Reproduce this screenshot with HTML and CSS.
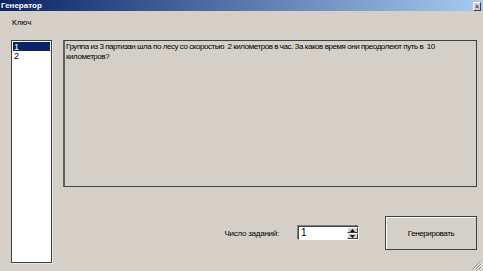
FILE: index.html
```html
<!DOCTYPE html>
<html lang="ru">

<head>
  <meta charset="UTF-8">
  <title>Генератор</title>
  <link rel="stylesheet" href="styles.css">
</head>

<body>
  <div class="gen-window">
    <!-- Заголовок окна -->
    <div class="gen-titlebar">
      <span class="gen-title">Генератор</span>
      <span class="gen-close">×</span>
    </div>

    <div class="gen-client">
      <div class="gen-key-label">Ключ</div>

      <div class="gen-main">
        <ul class="gen-list">
          <li class="gen-list-item gen-selected">1</li>
          <li class="gen-list-item">2</li>
        </ul>

        <div class="gen-right">
          <div class="gen-task">Группа из 3 партизан шла по лесу со скоростью  2 километров в час. За каков время они преодолеют путь в  10 километров?</div>

          <div class="gen-controls">
            <span class="gen-count-label">Число заданий:</span>
            <div class="gen-spin">
              <span class="gen-spin-value">1</span>
              <div class="gen-spin-buttons">
                <span class="gen-spin-btn">
                  <svg width="5" height="3" viewBox="0 0 5 3"><path d="M2.5 0 L5 3 L0 3 Z" fill="#000"/></svg>
                </span>
                <span class="gen-spin-btn">
                  <svg width="5" height="3" viewBox="0 0 5 3"><path d="M0 0 L5 0 L2.5 3 Z" fill="#000"/></svg>
                </span>
              </div>
            </div>
            <button class="gen-button">Генерировать</button>
          </div>
        </div>
      </div>
    </div>

    <!-- Уголок изменения размера -->
    <svg class="gen-grip" width="10" height="10" viewBox="0 0 10 10">
      <path d="M9 1 L1 9 M9 4 L4 9 M9 7 L7 9" stroke="#808080" stroke-width="1"/>
      <path d="M10 1 L2 9 M10 4 L5 9 M10 7 L8 9" stroke="#fff" stroke-width="1"/>
    </svg>
  </div>
</body>

</html>
```

FILE: styles.css
```css
body {
  margin: 0;
  padding: 0;
}

/* Окно целиком */
.gen-window {
  position: relative;
  width: 483px;
  height: 271px;
  background-color: #d4d0c8;
  font-family: 'Liberation Sans', Arial, sans-serif;
  font-size: 8px;
  color: #000;
  overflow: hidden;
}

.gen-titlebar {
  height: 11px;
  display: flex;
  align-items: center;
  justify-content: space-between;
  padding: 0 2px 0 1px;
  background: linear-gradient(to right, #0a246a, #a6caf0);
}

.gen-title {
  color: #fff;
  font-weight: 700;
  font-size: 8px;
  line-height: 11px;
}

.gen-close {
  width: 6px;
  height: 7px;
  background: #d4d0c8;
  border: 1px solid;
  border-color: #fff #404040 #404040 #fff;
  font-size: 7px;
  line-height: 7px;
  text-align: center;
  margin-top: 1px;
}

.gen-client {
  padding: 6px 6px 0 11px;
}

.gen-key-label {
  height: 12px;
  line-height: 12px;
  margin-left: 1px;
  margin-bottom: 11px;
}

.gen-main {
  display: flex;
  gap: 11px;
}

/* Список ключей */
.gen-list {
  list-style: none;
  margin: 0;
  padding: 1px;
  width: 37px;
  height: 219px;
  background: #fff;
  border: 1px solid #404040;
  box-shadow: 1px 1px 0 #e8e6e0;
}

.gen-list-item {
  height: 9px;
  line-height: 10px;
  padding-left: 1px;
  font-size: 9px;
}

.gen-selected {
  background: #0a246a;
  color: #fff;
}

.gen-right {
  width: 414px;
  display: flex;
  flex-direction: column;
}

/* Текст задачи */
.gen-task {
  padding: 1px 1px 0 1px;
  box-sizing: border-box;
  height: 147px;
  border: 1px solid #404040;
  border-left: 2px solid #606060;
  white-space: pre-wrap;
  line-height: 10px;
  letter-spacing: -0.45px;
}

.gen-controls {
  margin-top: 29px;
  display: flex;
  align-items: center;
  justify-content: flex-end;
}

.gen-count-label {
  letter-spacing: -0.25px;
}

.gen-spin {
  margin-left: 19px;
  width: 61px;
  height: 14px;
  box-sizing: border-box;
  display: flex;
  background: #fff;
  border: 1px solid;
  border-color: #404040 #fff #fff #404040;
  box-shadow: -1px -1px 0 #808080;
}

.gen-spin-value {
  flex: 1;
  padding-left: 2px;
  font-size: 10px;
  line-height: 12px;
}

.gen-spin-buttons {
  width: 11px;
  display: flex;
  flex-direction: column;
}

.gen-spin-btn {
  flex: 1;
  display: flex;
  align-items: center;
  justify-content: center;
  background: #d4d0c8;
  border: 1px solid;
  border-color: #fff #404040 #404040 #fff;
  box-sizing: border-box;
}

.gen-spin-btn svg {
  display: block;
}

.gen-button {
  margin-left: 26px;
  width: 92px;
  height: 34px;
  padding: 0;
  background: #d4d0c8;
  border: 1px solid #404040;
  box-shadow: inset 1px 1px 0 #fff;
  font-family: 'Liberation Sans', Arial, sans-serif;
  font-size: 8px;
  letter-spacing: -0.4px;
  color: #000;
}

.gen-grip {
  position: absolute;
  right: 1px;
  bottom: 1px;
}
```
